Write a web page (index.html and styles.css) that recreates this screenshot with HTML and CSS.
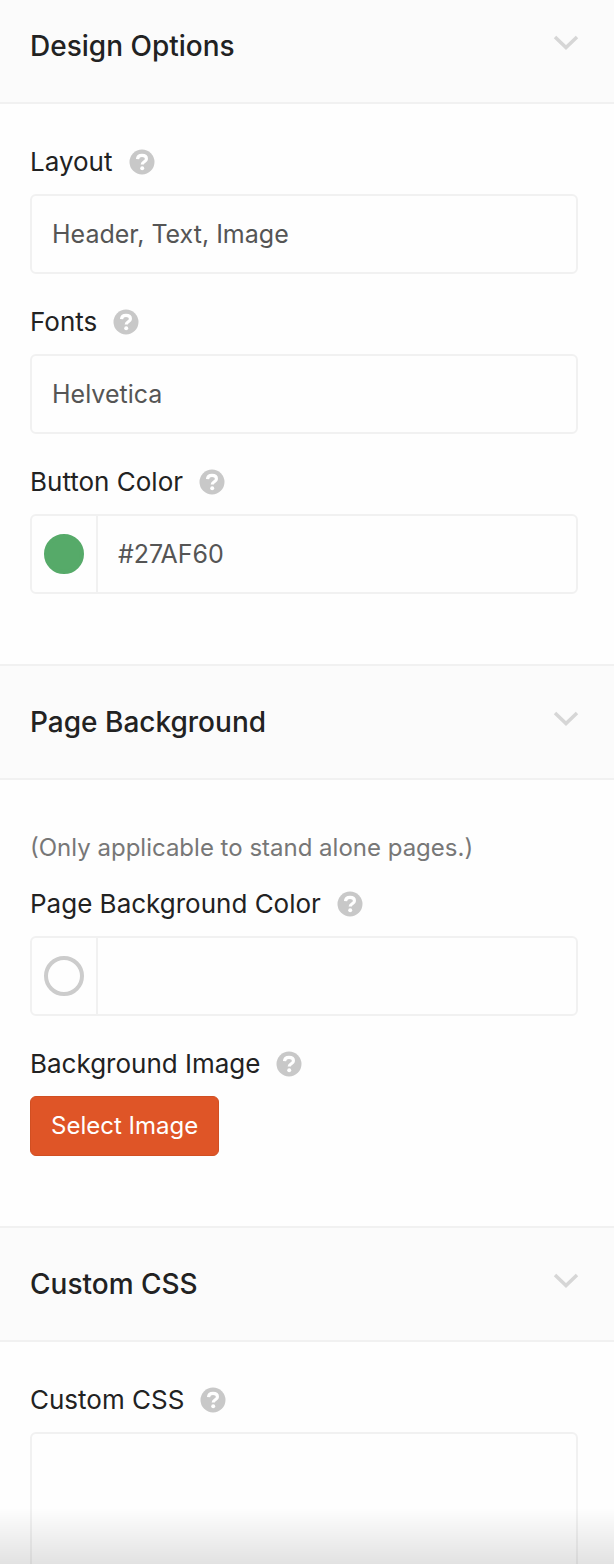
FILE: index.html
```
<!DOCTYPE html>
<html lang="en">
	<head>
		<meta charset="utf-8">
		<meta name="viewport" content="width=device-width, initial-scale=1">
		<title>Design Options</title>
		<link rel="stylesheet" href="styles.css">
	</head>
	<body>
		<svg class="sprite" aria-hidden="true">
			<symbol id="help" viewBox="0 0 26 26">
				<circle cx="13" cy="13" r="12.5" fill="#c8c8c8"/>
				<path d="M8.500 10.200C8.700 7.600 10.500 6.400 13 6.400c2.600 0 4.400 1.400 4.400 3.500 0 2.900-4.200 2.800-4.200 5.600" fill="none" stroke="#fff" stroke-width="3.200"/>
				<circle cx="13.200" cy="19.200" r="2" fill="#fff"/>
			</symbol>
			<symbol id="chevron" viewBox="0 0 26 16">
				<path d="M2 2l11 10.500L24 2" fill="none" stroke="#d6d6d6" stroke-width="3.500"/>
			</symbol>
		</svg>
		<form class="panel">
			<section>
				<button type="button" class="section-head first">
					<span>Design Options</span>
					<svg class="chevron"><use href="#chevron"/></svg>
				</button>
				<div class="section-body">
					<div class="field">
						<label for="layout">Layout <svg class="help"><use href="#help"/></svg></label>
						<input type="text" id="layout" class="box" value="Header, Text, Image">
					</div>
					<div class="field">
						<label for="fonts">Fonts <svg class="help"><use href="#help"/></svg></label>
						<input type="text" id="fonts" class="box" value="Helvetica">
					</div>
					<div class="field">
						<label for="button_color">Button Color <svg class="help"><use href="#help"/></svg></label>
						<div class="box color">
							<button type="button" class="picker" aria-label="Pick button color"><span class="swatch green"></span></button>
							<input type="text" id="button_color" value="#27AF60">
						</div>
					</div>
				</div>
			</section>
			<section>
				<button type="button" class="section-head">
					<span>Page Background</span>
					<svg class="chevron"><use href="#chevron"/></svg>
				</button>
				<div class="section-body">
					<p class="note">(Only applicable to stand alone pages.)</p>
					<div class="field">
						<label for="page_color">Page Background Color <svg class="help"><use href="#help"/></svg></label>
						<div class="box color">
							<button type="button" class="picker" aria-label="Pick page background color"><span class="swatch"></span></button>
							<input type="text" id="page_color">
						</div>
					</div>
					<div class="field">
						<label for="bg_image">Background Image <svg class="help"><use href="#help"/></svg></label>
						<button type="button" id="bg_image" class="select-image">Select Image</button>
					</div>
				</div>
			</section>
			<section>
				<button type="button" class="section-head">
					<span>Custom CSS</span>
					<svg class="chevron"><use href="#chevron"/></svg>
				</button>
				<div class="section-body">
					<div class="field">
						<label for="custom_css">Custom CSS <svg class="help"><use href="#help"/></svg></label>
						<textarea id="custom_css" class="box" rows="8"></textarea>
					</div>
				</div>
			</section>
		</form>
		<div class="shade"></div>
	</body>
</html>
```
FILE: styles.css
```
* {
	box-sizing: border-box;
}

body {
	margin: 0;
	background: #fefefe;
	color: #222;
	font-family: Inter, "Liberation Sans", sans-serif;
	font-size: 26px;
	line-height: 32px;
}

button,
input,
textarea {
	font: inherit;
	color: inherit;
}

.sprite {
	position: absolute;
	width: 0;
	height: 0;
}

.panel {
	height: 100vh;
	overflow: hidden;
}

/* section headings */
.section-head {
	display: flex;
	justify-content: space-between;
	align-items: flex-start;
	width: 100%;
	padding: 40px 35px 40px 30px;
	border: 0 solid #f1f1f1;
	border-width: 2px 0;
	background: #fbfbfb;
	font-size: 28px;
	font-weight: 500;
	text-align: left;
}

.section-head.first {
	padding-top: 30px;
	border-top: 0;
}

.chevron {
	width: 26px;
	height: 16px;
	margin-top: 5px;
}

.section-body {
	padding: 42px 36px 38px 30px;
}

/* fields */
.field {
	margin-bottom: 32px;
}

.field label {
	display: flex;
	align-items: center;
	gap: 16px;
	margin-bottom: 16px;
}

.help {
	width: 26px;
	height: 26px;
}

.box {
	display: block;
	width: 100%;
	height: 80px;
	padding: 0 20px;
	border: 2px solid #f1f1f1;
	border-radius: 6px;
	background: #fefefe;
	color: #555;
	font-size: 25px;
	outline: none;
}

textarea.box {
	height: auto;
	padding: 20px;
	resize: none;
}

.color {
	display: flex;
	padding: 0;
}

.color input {
	flex: 1;
	min-width: 0;
	padding: 0 20px;
	border: 0;
	background: none;
	outline: none;
}

.picker {
	display: flex;
	align-items: center;
	justify-content: center;
	width: 66px;
	padding: 0;
	border: 0;
	border-right: 2px solid #f1f1f1;
	background: none;
}

.swatch {
	width: 40px;
	height: 40px;
	border: 4px solid #ccc;
	border-radius: 50%;
}

.swatch.green {
	border-color: #56aa69;
	background: #56aa69;
}

.note {
	margin: 10px 0 24px;
	color: #777;
	font-size: 24px;
}

.select-image {
	display: block;
	height: 60px;
	padding: 0 20px;
	border: 1px solid #d14f22;
	border-radius: 6px;
	background: #df5527;
	color: #fff;
	font-size: 24px;
}

.shade {
	position: fixed;
	right: 0;
	bottom: 0;
	left: 0;
	height: 56px;
	background: linear-gradient(rgba(0, 0, 0, 0), rgba(0, 0, 0, 0.11));
	pointer-events: none;
}
```
